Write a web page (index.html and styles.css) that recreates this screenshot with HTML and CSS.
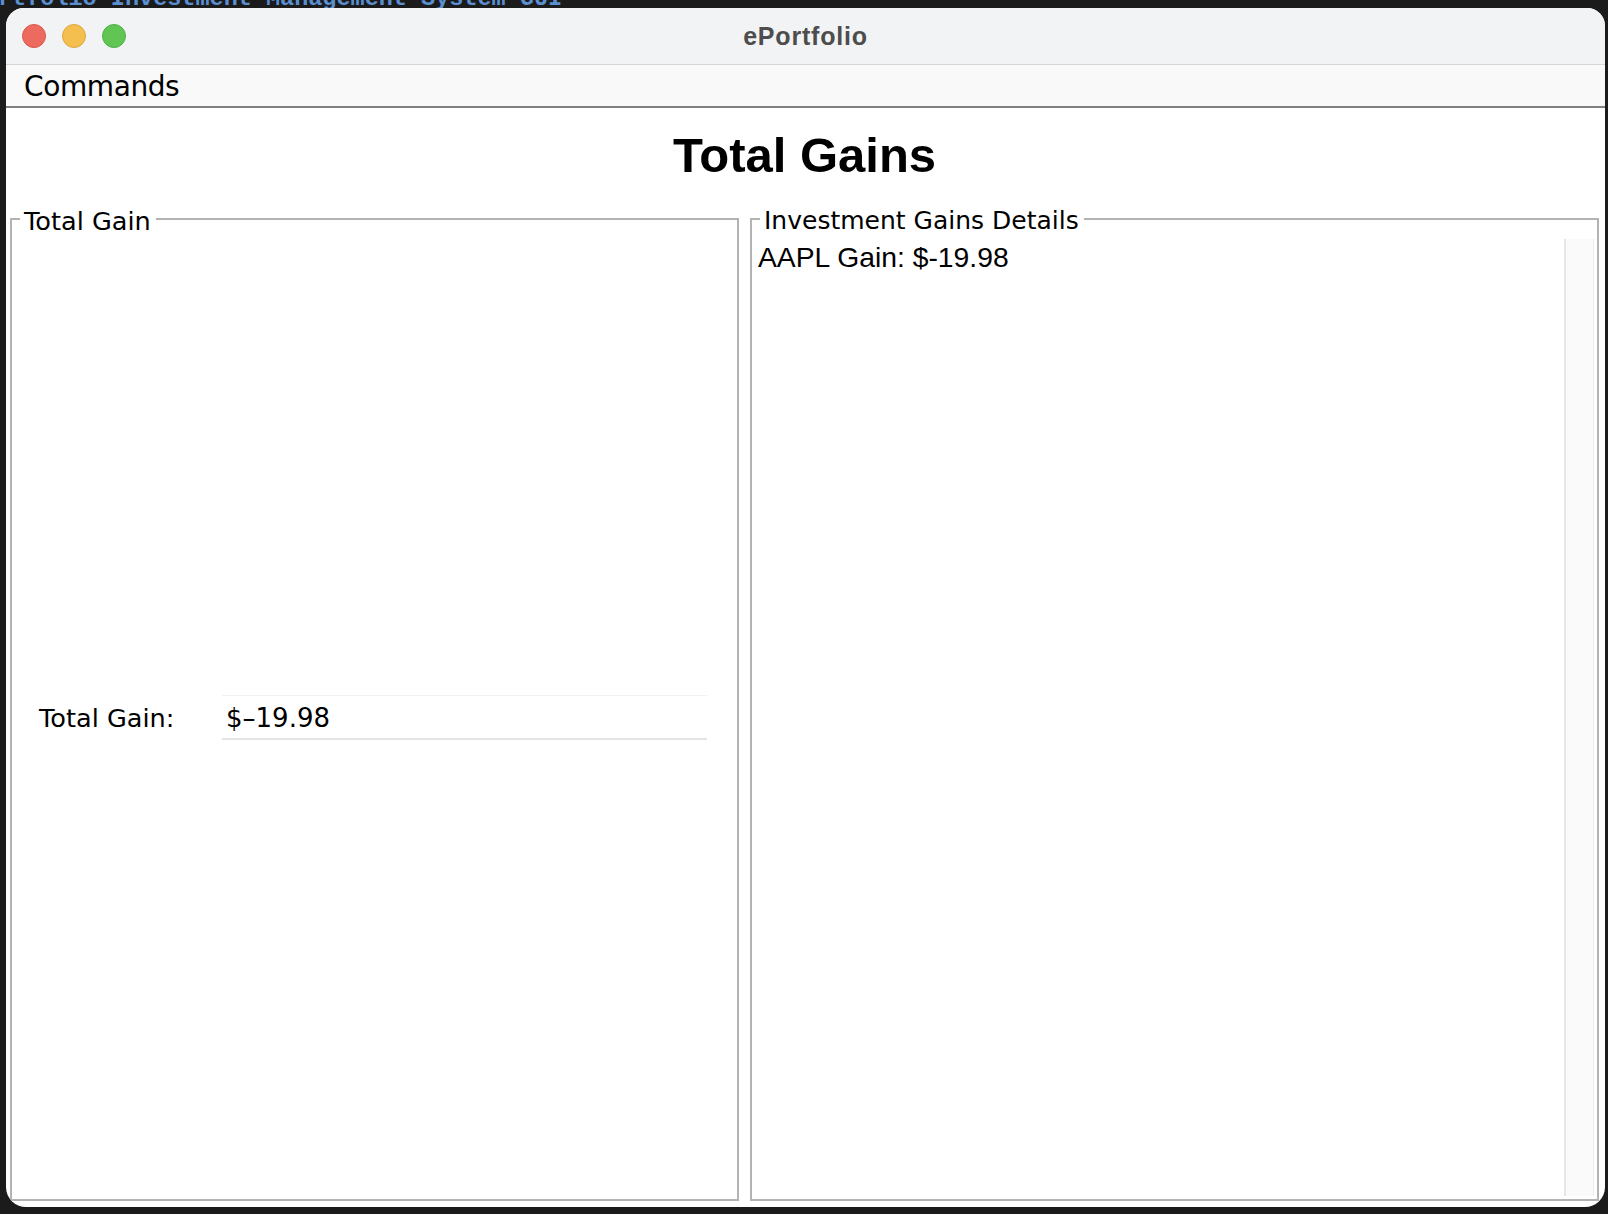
FILE: index.html
```html
<!DOCTYPE html>
<html lang="en">
<head>
<meta charset="utf-8">
<title>ePortfolio</title>
<link rel="stylesheet" href="styles.css">
</head>
<body>
<div class="backdrop">rtfolio Investment Management System GUI</div>
<div class="window">
  <div class="titlebar">
    <div class="lights">
      <span class="light red"></span>
      <span class="light yellow"></span>
      <span class="light green"></span>
    </div>
    <div class="title">ePortfolio</div>
    <div></div>
  </div>
  <div class="menubar"><span class="menu">Commands</span></div>
  <div class="content">
    <h1 class="heading">Total Gains</h1>
    <div class="panels">
      <fieldset class="panel panel-left">
        <legend>Total Gain</legend>
        <div class="gain-row">
          <span class="gain-label">Total Gain:</span>
          <div class="gain-field">$&#8211;19.98</div>
        </div>
      </fieldset>
      <fieldset class="panel panel-right">
        <legend>Investment Gains Details</legend>
        <div class="scrollpane">
          <div class="details">AAPL Gain: $-19.98</div>
          <div class="scrollbar"></div>
        </div>
      </fieldset>
    </div>
  </div>
</div>
</body>
</html>
```

FILE: styles.css
```css
html, body {
  margin: 0;
  padding: 0;
  background: #1b1b1b;
  overflow: hidden;
}

body {
  position: relative;
  width: 1608px;
  height: 1214px;
  padding-top: 8px;
  box-sizing: border-box;
}

.backdrop {
  position: absolute;
  left: -2px;
  top: -15px;
  font-family: "Liberation Mono", monospace;
  font-weight: bold;
  font-size: 23.5px;
  line-height: 28px;
  color: #5b8fd0;
  white-space: nowrap;
  z-index: 0;
}

.window {
  position: relative;
  z-index: 1;
  margin-left: 6px;
  width: 1599px;
  height: 1199px;
  background: #ffffff;
  border-radius: 18px 18px 20px 20px;
  overflow: hidden;
  display: flex;
  flex-direction: column;
}

.titlebar {
  height: 56px;
  flex: 0 0 56px;
  background: #f2f3f4;
  border-bottom: 1px solid #d5d5d5;
  display: grid;
  grid-template-columns: 1fr auto 1fr;
  align-items: center;
}

.lights {
  display: flex;
  gap: 16px;
  padding-left: 16px;
}

.light {
  width: 24px;
  height: 24px;
  border-radius: 50%;
  box-sizing: border-box;
}

.red { background: #ed6a5e; border: 1px solid #d8584d; }
.yellow { background: #f5bf4f; border: 1px solid #dca63d; }
.green { background: #61c554; border: 1px solid #4fae44; }

.title {
  font-family: "Liberation Sans", Arial, sans-serif;
  font-weight: bold;
  font-size: 25px;
  letter-spacing: 0.8px;
  color: #4d4d4d;
  line-height: 54px;
}

.menubar {
  height: 41px;
  flex: 0 0 41px;
  background: #f9f9f9;
  border-bottom: 2px solid #7f7f7f;
  display: flex;
  align-items: center;
}

.menu {
  font-family: "DejaVu Sans", sans-serif;
  font-size: 28px;
  letter-spacing: -0.4px;
  line-height: 41px;
  padding-top: 2px;
  color: #000;
  padding-left: 18px;
}

.content {
  flex: 1;
  display: flex;
  flex-direction: column;
  padding: 0 6px 6px 4px;
  min-height: 0;
}

.heading {
  margin: 20px 0 0 0;
  text-align: center;
  font-family: "Liberation Sans", Arial, sans-serif;
  font-weight: bold;
  font-size: 49px;
  line-height: 55px;
  color: #000;
  height: 55px;
}

.panels {
  flex: 1;
  margin-top: 20px;
  display: flex;
  gap: 11px;
  min-height: 0;
}

.panel {
  margin: 0;
  padding: 4px 3px 3px 3px;
  border: 2px solid #b3b3b3;
  min-width: 0;
  box-sizing: border-box;
  display: flex;
  flex-direction: column;
}

.panel legend {
  font-family: "DejaVu Sans", sans-serif;
  font-size: 25px;
  line-height: 28px;
  color: #000;
  padding: 4px 5px 0 4px;
  margin-left: 5px;
}

.panel-left {
  width: 729px;
  flex: 0 0 729px;
}

.panel-left legend {
  font-size: 25.6px;
}

.panel-right {
  flex: 1;
}

.gain-row {
  flex: 1;
  display: flex;
  align-items: center;
  padding: 0 27px 0 24px;
}

.gain-label {
  width: 183px;
  flex: 0 0 183px;
  font-family: "DejaVu Sans", sans-serif;
  font-size: 25.6px;
  color: #000;
}

.gain-field {
  flex: 1;
  height: 45px;
  box-sizing: border-box;
  border-top: 1px solid #f1f1f1;
  border-bottom: 2px solid #e4e4e4;
  background: #fff;
  padding-left: 4px;
  font-family: "DejaVu Sans", sans-serif;
  font-size: 26px;
  line-height: 44px;
  color: #000;
}

.scrollpane {
  flex: 1;
  display: flex;
  min-height: 0;
}

.details {
  flex: 1;
  padding-left: 3px;
  padding-top: 2px;
  font-family: "Liberation Sans", Arial, sans-serif;
  font-size: 28.3px;
  color: #000;
}

.scrollbar {
  width: 30px;
  flex: 0 0 30px;
  box-sizing: border-box;
  background: #fafafa;
  border-left: 2px solid #e6e6e6;
  border-right: 1px solid #ececec;
}
```
